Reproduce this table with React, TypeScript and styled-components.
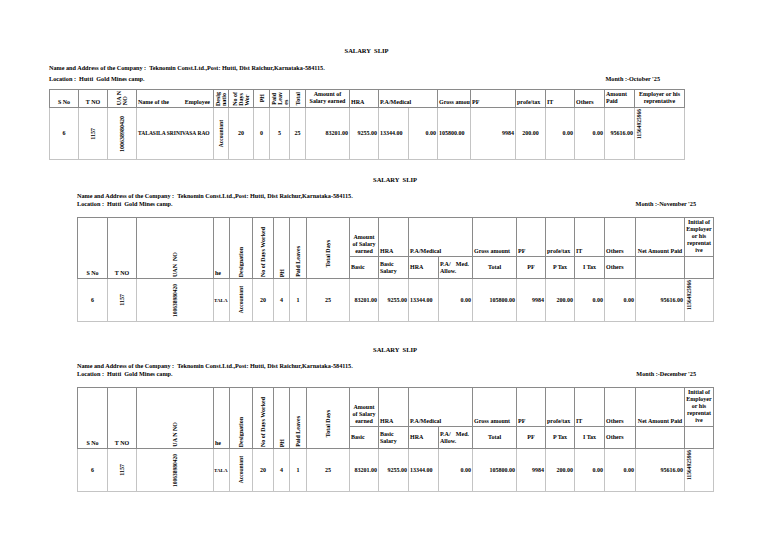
import React from 'react';
import styled, { createGlobalStyle } from 'styled-components';

const GlobalStyle = createGlobalStyle`
  html, body {
    margin: 0;
    padding: 0;
    background: #fff;
  }
  body {
    font-family: "Liberation Serif", "Times New Roman", serif;
    color: #000;
  }
`;

const COMPANY =
  'Name and Address of the Company :  Teknomin Const.Ltd.,Post: Hutti, Dist Raichur,Karnataka-584115.';
const LOCATION = 'Location :  Hutti  Gold Mines camp.';

// column widths in px, read off the sheet
const octoberCols = [29, 29, 29, 77, 15, 25, 16, 20, 16, 44, 29, 30, 29, 33, 45, 30, 29, 30, 30, 50];
const monthlyCols = [30, 29, 77, 16, 23, 21, 16, 17, 43, 29, 30, 30, 34, 44, 29, 29, 30, 31, 49, 29];

const sum = (list: number[]) => list.reduce((a, b) => a + b, 0);

type Slip = {
  month: string;
  uanLabel: string;
  top: number;
};

const slips: Slip[] = [
  { month: "Month :-November '25", uanLabel: 'UAN\u00a0\u00a0NO', top: 16 },
  { month: "Month :-December '25", uanLabel: 'UA N NO', top: 24 },
];

const OctoberSlip = () => (
  <Slip $left={49} $top={47} $width={sum(octoberCols)}>
    <Title>SALARY  SLIP</Title>
    <Company $gap={9}>{COMPANY}</Company>
    <InfoRow $gap={3} $pad={24}>
      <span>{LOCATION}</span>
      <span>Month :-October '25</span>
    </InfoRow>
    <Sheet $gap={6} $width={sum(octoberCols)}>
      <colgroup>
        {octoberCols.map((w, i) => (
          <Col key={i} $w={w} />
        ))}
      </colgroup>
      <tbody>
        <tr>
          <Head $h={18} $v="bottom">S No</Head>
          <Head $v="bottom">T NO</Head>
          <Head>
            <Vertical>
              UA N
              <br />
              NO
            </Vertical>
          </Head>
          <Head $align="left" $v="bottom">
            <Spread>
              <span>Name of the</span>
              <span>Employee</span>
            </Spread>
          </Head>
          <Head>
            <Vertical>
              Desig
              <br />
              natio
            </Vertical>
          </Head>
          <Head>
            <Vertical>
              No of
              <br />
              Days
              <br />
              Wor
            </Vertical>
          </Head>
          <Head>
            <Vertical>PH</Vertical>
          </Head>
          <Head>
            <Vertical>
              Paid
              <br />
              Leav
              <br />
              es
            </Vertical>
          </Head>
          <Head>
            <Vertical>Total</Vertical>
          </Head>
          <Head $v="top">
            Amount of
            <br />
            Salary earned
          </Head>
          <Head $align="left" $v="bottom">HRA</Head>
          <Head $align="left" $v="bottom" colSpan={2}>
            P.A/Medical
          </Head>
          <Head $align="left" $v="bottom">Gross amou</Head>
          <Head $align="left" $v="bottom">PF</Head>
          <Head $align="left" $v="bottom">profe/tax</Head>
          <Head $align="left" $v="bottom">IT</Head>
          <Head $align="left" $v="bottom">Others</Head>
          <Head $align="left" $v="top">
            Amount
            <br />
            Paid
          </Head>
          <Head $v="top">
            Employer or his
            <br />
            reprentative
          </Head>
        </tr>
        <tr>
          <Cell $h={52}>6</Cell>
          <Cell>
            <Vertical>1157</Vertical>
          </Cell>
          <Cell>
            <Vertical>100638980420</Vertical>
          </Cell>
          <Cell $align="left" $small>
            TALASILA SRINIVASA RAO
          </Cell>
          <Cell $small>
            <Vertical>Accountant</Vertical>
          </Cell>
          <Cell>20</Cell>
          <Cell>0</Cell>
          <Cell>5</Cell>
          <Cell>25</Cell>
          <Cell $align="right">83201.00</Cell>
          <Cell $align="right">9255.00</Cell>
          <Cell $align="left">13344.00</Cell>
          <Cell $align="right">0.00</Cell>
          <Cell $align="left">105800.00</Cell>
          <Cell $align="right">9984</Cell>
          <Cell>200.00</Cell>
          <Cell $align="right">0.00</Cell>
          <Cell $align="right">0.00</Cell>
          <Cell $align="right">95616.00</Cell>
          <Cell $align="left" $v="top" $small>
            <Vertical $left>11564925966</Vertical>
          </Cell>
        </tr>
      </tbody>
    </Sheet>
  </Slip>
);

const MonthlySlip = ({ month, uanLabel, top }: Slip) => (
  <Slip $left={77} $top={top} $width={sum(monthlyCols)}>
    <Title>SALARY  SLIP</Title>
    <Company $gap={8}>{COMPANY}</Company>
    <InfoRow $gap={0} $pad={17}>
      <span>{LOCATION}</span>
      <span>{month}</span>
    </InfoRow>
    <Sheet $gap={9} $width={sum(monthlyCols)}>
      <colgroup>
        {monthlyCols.map((w, i) => (
          <Col key={i} $w={w} />
        ))}
      </colgroup>
      <tbody>
        <tr>
          <Head rowSpan={2} $v="bottom">S No</Head>
          <Head rowSpan={2} $v="bottom">T NO</Head>
          <Head rowSpan={2} $v="bottom">
            <Vertical>{uanLabel}</Vertical>
          </Head>
          <Head rowSpan={2} $align="left" $v="bottom">he</Head>
          <Head rowSpan={2} $v="bottom">
            <Vertical>Designation</Vertical>
          </Head>
          <Head rowSpan={2} $v="bottom">
            <Vertical>No of Days Worked</Vertical>
          </Head>
          <Head rowSpan={2} $v="bottom">
            <Vertical>PH</Vertical>
          </Head>
          <Head rowSpan={2} $v="bottom">
            <Vertical>Paid Leaves</Vertical>
          </Head>
          <Head rowSpan={2} $pad={12}>
            <Vertical>Total Days</Vertical>
          </Head>
          <Head $h={39} $v="bottom">
            Amount
            <br />
            of Salary
            <br />
            earned
          </Head>
          <Head $align="left" $v="bottom">HRA</Head>
          <Head $align="left" $v="bottom" colSpan={2}>
            P.A/Medical
          </Head>
          <Head $align="left" $v="bottom">Gross amount</Head>
          <Head $align="left" $v="bottom">PF</Head>
          <Head $align="left" $v="bottom">profe/tax</Head>
          <Head $align="left" $v="bottom">IT</Head>
          <Head $align="left" $v="bottom">Others</Head>
          <Head $v="bottom">Net Amount Paid</Head>
          <Head $v="top">
            Initial of
            <br />
            Employer
            <br />
            or his
            <br />
            reprentat
            <br />
            ive
          </Head>
        </tr>
        <tr>
          <Head $h={22} $align="left">Basic</Head>
          <Head $align="left">
            Basic
            <br />
            Salary
          </Head>
          <Head $align="left">HRA</Head>
          <Head $align="left">
            <Spread>
              <span>P.A/</span>
              <span>Med.</span>
            </Spread>
            Allow.
          </Head>
          <Head>Total</Head>
          <Head>PF</Head>
          <Head>P Tax</Head>
          <Head>I Tax</Head>
          <Head $align="left">Others</Head>
          <Head />
          <Head />
        </tr>
        <tr>
          <Cell $h={43}>6</Cell>
          <Cell>
            <Vertical>1157</Vertical>
          </Cell>
          <Cell $small>
            <Vertical>100638980420</Vertical>
          </Cell>
          <Cell $align="left" $tight>
            TALA
          </Cell>
          <Cell $small>
            <Vertical>Accountant</Vertical>
          </Cell>
          <Cell>20</Cell>
          <Cell>4</Cell>
          <Cell>1</Cell>
          <Cell>25</Cell>
          <Cell $align="right">83201.00</Cell>
          <Cell $align="right">9255.00</Cell>
          <Cell $align="left">13344.00</Cell>
          <Cell $align="right">0.00</Cell>
          <Cell $align="right">105800.00</Cell>
          <Cell $align="right">9984</Cell>
          <Cell $align="right">200.00</Cell>
          <Cell $align="right">0.00</Cell>
          <Cell $align="right">0.00</Cell>
          <Cell $align="right">95616.00</Cell>
          <Cell $align="left" $v="top" $small>
            <Vertical $left>11564925966</Vertical>
          </Cell>
        </tr>
      </tbody>
    </Sheet>
  </Slip>
);

const App = () => (
  <>
    <GlobalStyle />
    <Page>
      <OctoberSlip />
      {slips.map((slip) => (
        <MonthlySlip key={slip.month} {...slip} />
      ))}
    </Page>
  </>
);

export default App;

const Page = styled.div`
  width: 768px;
  min-height: 543px;
  overflow: hidden;
  background: #fff;
`;

const Slip = styled.section<{ $left: number; $top: number; $width: number }>`
  margin: ${(p) => p.$top}px 0 0 ${(p) => p.$left}px;
  width: ${(p) => p.$width}px;
  font-weight: bold;
`;

const Title = styled.div`
  text-align: center;
  font-size: 6.5px;
  line-height: 8px;
  white-space: pre;
`;

const Company = styled.div<{ $gap: number }>`
  margin-top: ${(p) => p.$gap}px;
  font-size: 6.2px;
  line-height: 8px;
  white-space: pre;
`;

const InfoRow = styled.div<{ $gap: number; $pad: number }>`
  display: flex;
  justify-content: space-between;
  align-items: flex-end;
  margin-top: ${(p) => p.$gap}px;
  padding-right: ${(p) => p.$pad}px;
  font-size: 6.2px;
  line-height: 8px;
  white-space: pre;
`;

const Sheet = styled.table<{ $gap: number; $width: number }>`
  margin-top: ${(p) => p.$gap}px;
  width: ${(p) => p.$width}px;
  table-layout: fixed;
  border-collapse: collapse;
  border-top: 1px solid #666;
`;

const Col = styled.col<{ $w: number }>`
  width: ${(p) => p.$w}px;
`;

type CellProps = {
  $align?: 'left' | 'center' | 'right';
  $v?: 'top' | 'middle' | 'bottom';
  $h?: number;
  $pad?: number;
  $small?: boolean;
  $tight?: boolean;
};

// cell heights are given as the drawn row height; padding and border come off
const Head = styled.td<CellProps>`
  height: ${(p) => (p.$h ? `${p.$h - 3}px` : 'auto')};
  padding: ${(p) => p.$pad ?? 1}px 1px 1px;
  border: 1px solid #8a8a8a;
  text-align: ${(p) => p.$align ?? 'center'};
  vertical-align: ${(p) => p.$v ?? 'middle'};
  font-size: 6px;
  line-height: 7px;
  white-space: nowrap;
  overflow: hidden;
`;

const Cell = styled.td<CellProps>`
  height: ${(p) => (p.$h ? `${p.$h - 3}px` : 'auto')};
  padding: ${(p) => (p.$tight ? '1px 0' : '1px')};
  border: 1px solid #c4c4c4;
  text-align: ${(p) => p.$align ?? 'center'};
  vertical-align: ${(p) => p.$v ?? 'middle'};
  font-size: ${(p) => (p.$tight ? 5 : p.$small ? 5.5 : 6)}px;
  line-height: 7px;
  white-space: nowrap;
  overflow: hidden;
`;

const Vertical = styled.span<{ $left?: boolean }>`
  display: block;
  margin: ${(p) => (p.$left ? '0' : '0 auto')};
  writing-mode: vertical-rl;
  transform: rotate(180deg);
  text-align: left;
  line-height: 6px;
`;

const Spread = styled.span`
  display: flex;
  justify-content: space-between;
  padding-right: 2px;
`;
